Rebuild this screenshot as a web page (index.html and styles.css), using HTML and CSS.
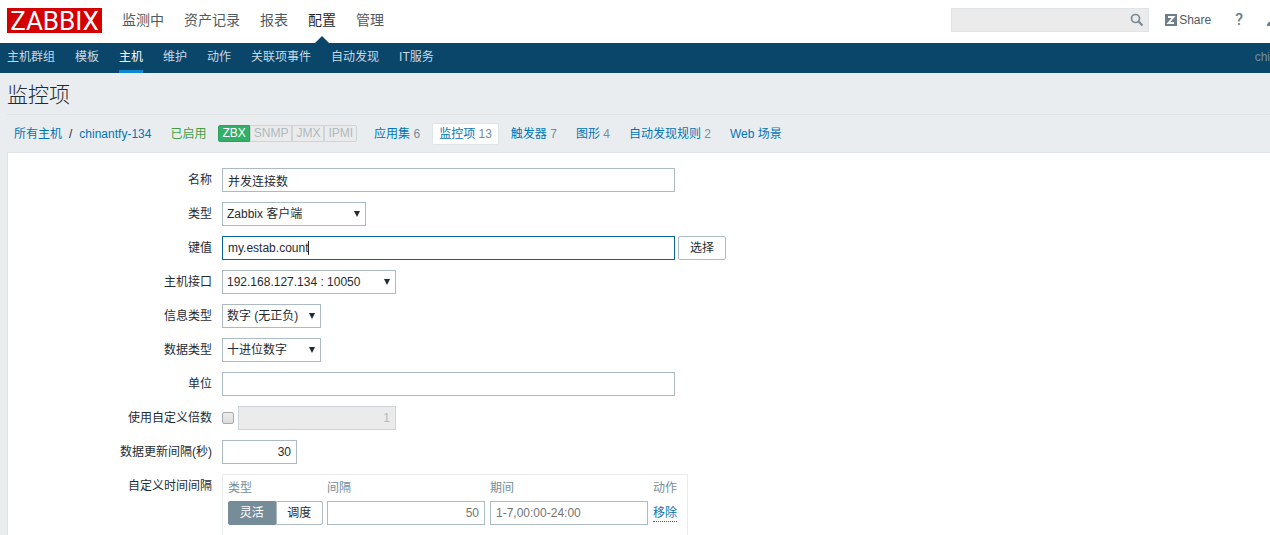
FILE: index.html
```html
<!DOCTYPE html>
<html lang="zh-CN">
<head>
<meta charset="utf-8">
<title>监控项</title>
<link rel="stylesheet" href="styles.css">
</head>
<body>
<header class="top">
  <a class="logo" href="#">ZABBIX</a>
  <nav class="main-nav">
    <a href="#">监测中</a>
    <a href="#">资产记录</a>
    <a href="#">报表</a>
    <a href="#" class="selected">配置</a>
    <a href="#">管理</a>
  </nav>
  <div class="tools">
    <form class="search">
      <input type="search" aria-label="搜索">
      <button type="button" aria-label="搜索">
        <svg width="14" height="14" viewBox="0 0 14 14" fill="none" stroke="#768d99"><circle cx="5.5" cy="5.5" r="4" stroke-width="1.7"/><path d="M8.3 8.3l4.2 4.2" stroke-width="2.2"/></svg>
      </button>
    </form>
    <a class="share" href="#"><svg width="12" height="12" viewBox="0 0 12 12"><path fill="#6c7f8a" d="M0 0h12v12H0z"/><path d="M3 3h5.6L3.4 9H9" fill="none" stroke="#fff" stroke-width="1.8"/></svg>Share</a>
    <a class="help" href="#" aria-label="帮助">?</a>
    <a class="profile" href="#" aria-label="用户"><svg width="14" height="14" viewBox="0 0 14 14" fill="#6c7f8a"><circle cx="7" cy="4" r="3"/><path d="M0 13c0-3 2-5 7-5s7 2 7 5z"/></svg></a>
  </div>
</header>
<nav class="sub-nav">
  <a href="#">主机群组</a>
  <a href="#">模板</a>
  <a href="#" class="selected">主机</a>
  <a href="#">维护</a>
  <a href="#">动作</a>
  <a href="#">关联项事件</a>
  <a href="#">自动发现</a>
  <a href="#">IT服务</a>
  <span class="server">chi</span>
</nav>
<main class="page">
  <h1>监控项</h1>
  <div class="object-bar">
    <div class="crumbs"><a href="#">所有主机</a><span>/</span><a href="#">chinantfy-134</a></div>
    <span class="enabled">已启用</span>
    <div class="status"><span class="on">ZBX</span><span>SNMP</span><span>JMX</span><span>IPMI</span></div>
    <a href="#">应用集 <sup>6</sup></a>
    <a href="#" class="selected">监控项 <sup>13</sup></a>
    <a href="#">触发器 <sup>7</sup></a>
    <a href="#">图形 <sup>4</sup></a>
    <a href="#">自动发现规则 <sup>2</sup></a>
    <a href="#">Web 场景</a>
  </div>
  <form class="panel">
    <label for="name">名称</label>
    <div class="field"><input class="wide" id="name" type="text" value="并发连接数"></div>
    <label for="type">类型</label>
    <div class="field"><span class="select type"><select id="type"><option>Zabbix 客户端</option></select></span></div>
    <label for="key">键值</label>
    <div class="field"><span class="caret"><input class="wide focused" id="key" type="text" value="my.estab.count"></span><button class="pick" type="button">选择</button></div>
    <label for="iface">主机接口</label>
    <div class="field"><span class="select iface"><select id="iface"><option>192.168.127.134 : 10050</option></select></span></div>
    <label for="info">信息类型</label>
    <div class="field"><span class="select short"><select id="info"><option>数字 (无正负)</option></select></span></div>
    <label for="data">数据类型</label>
    <div class="field"><span class="select short"><select id="data"><option>十进位数字</option></select></span></div>
    <label for="units">单位</label>
    <div class="field"><input class="wide" id="units" type="text"></div>
    <label for="multi">使用自定义倍数</label>
    <div class="field"><input id="multi" type="checkbox"><input class="medium number" type="text" value="1" aria-label="倍数" disabled></div>
    <label for="delay">数据更新间隔(秒)</label>
    <div class="field"><input class="tiny number" id="delay" type="text" value="30"></div>
    <span class="label">自定义时间间隔</span>
    <div class="intervals">
      <table>
        <thead><tr><th>类型</th><th>间隔</th><th>期间</th><th>动作</th></tr></thead>
        <tbody><tr>
          <td><div class="segmented"><input type="radio" name="kind" id="flex" checked><label for="flex">灵活</label><input type="radio" name="kind" id="sched"><label for="sched">调度</label></div></td>
          <td><input class="medium number" type="text" placeholder="50" aria-label="间隔"></td>
          <td><input class="medium" type="text" placeholder="1-7,00:00-24:00" aria-label="期间"></td>
          <td><button class="remove" type="button">移除</button></td>
        </tr></tbody>
      </table>
    </div>
  </form>
</main>
</body>
</html>
```
FILE: styles.css
```css
* { box-sizing: border-box; }

body {
  display: flex;
  flex-direction: column;
  min-height: 100vh;
  margin: 0;
  overflow-x: hidden;
  background: #e9edf0;
  color: #1f2c33;
  font: 12px/18px "Liberation Sans", "Noto Sans CJK SC", sans-serif;
}

a { color: #0275b8; text-decoration: none; }
input, select, button { margin: 0; color: inherit; font: inherit; }

.top {
  display: flex;
  align-items: center;
  height: 43px;
  padding: 0 0 3px 7px;
  overflow: hidden;
  background: #fff;
}

.logo {
  width: 95px;
  height: 25px;
  background: #d40000;
  color: #fff;
  font: 26px/26px Roboto, sans-serif;
  text-align: center;
}

.main-nav { display: flex; gap: 20px; margin-left: 20px; }
.main-nav a { position: relative; color: #4f5b62; font-size: 14px; line-height: 40px; }
.main-nav .selected { color: #1f2c33; }
.main-nav .selected::after {
  content: "";
  position: absolute;
  bottom: -4px;
  left: 6px;
  border: 8px solid transparent;
  border-top: 0;
  border-bottom-color: #0a466a;
}

.tools { display: flex; align-items: center; margin: 0 -11px 0 auto; }
.tools a { color: #4f5b62; }
.search {
  display: flex;
  align-items: center;
  width: 198px;
  height: 24px;
  padding: 0 4px;
  border: 1px solid #dfe4e7;
  background: #ebebeb;
}
.search input { flex: 1; min-width: 0; border: 0; outline: 0; background: none; }
.search button { display: flex; padding: 0; border: 0; background: none; }
.share { display: flex; align-items: center; gap: 2px; margin-left: 16px; }
.tools .help {
  margin-left: 24px;
  color: #6c7f8a;
  font: 500 16px/18px Roboto, sans-serif;
}
.profile { display: flex; margin-left: 24px; }

.sub-nav {
  display: flex;
  gap: 20px;
  padding-left: 7px;
  overflow: hidden;
  background: #0a466a;
  line-height: 27px;
}
.sub-nav a { padding-top: 2px; border-bottom: 3px solid transparent; color: #c8d8e2; line-height: 25px; }
.sub-nav .selected { border-color: #0f87cf; color: #fff; }
.server { margin-left: auto; padding-top: 1px; color: #728e9e; }

.page { display: flex; flex: 1; flex-direction: column; padding-left: 7px; }
h1 {
  margin: 0;
  padding-top: 2px;
  border-bottom: 1px solid #dfe4e7;
  font-size: 21px;
  font-weight: 300;
  line-height: 39px;
}

.object-bar { display: flex; align-items: center; gap: 5px; height: 37px; }
.object-bar > a, .crumbs, .enabled {
  padding: 1px 6px;
  border: 1px solid transparent;
  border-radius: 2px;
}
.object-bar > .selected { border-color: #dfe4e7; background: #fff; }
.object-bar sup { color: #768d99; font-size: 12px; line-height: 18px; vertical-align: baseline; }
.crumbs { display: flex; gap: 7px; }
.enabled { color: #429e47; }
.status { display: flex; margin-right: 5px; }
.status span {
  padding: 0 3px;
  border: 1px solid #ccd5d9;
  background: #ebebeb;
  color: #acbbc2;
  line-height: 15px;
}
.status .on { border-color: #2f9f5e; border-radius: 2px 0 0 2px; background: #34af67; color: #fff; }
.status span:last-child { border-radius: 0 2px 2px 0; }

.panel {
  display: grid;
  flex: 1;
  grid-template-columns: 204px 1fr;
  align-content: start;
  gap: 10px;
  padding-top: 15px;
  border: 1px solid #dfe4e7;
  border-width: 1px 0 0 1px;
  background: #fff;
}
.panel > label, .label { line-height: 24px; text-align: right; }
.field { display: flex; align-items: center; gap: 3px; }

input[type="text"], select {
  height: 24px;
  padding: 0 5px;
  border: 1px solid #acbbc2;
  border-radius: 0;
  outline: 0;
  background: #fff;
}
input[type="text"]:disabled { border-color: #ccd5d9; background: #ebebeb; color: #acbbc2; }
input::placeholder { color: #757575; opacity: 1; }
.wide { width: 453px; }
.medium { width: 158px; }
.tiny { width: 75px; }
.number { text-align: right; }
input[type="text"].focused { border-color: #0a6496; }

.caret { display: flex; position: relative; }
.caret::after {
  content: "";
  position: absolute;
  top: 5px;
  left: 86px;
  width: 1px;
  height: 14px;
  background: #1f2c33;
}

.select { position: relative; }
.select::after {
  content: "";
  position: absolute;
  top: 9px;
  right: 6px;
  border: 3px solid transparent;
  border-top: 6px solid #1f2c33;
  border-bottom: 0;
}
.select select { display: block; width: 100%; padding: 0 4px; appearance: none; }
.type { width: 144px; }
.iface { width: 174px; }
.short { width: 99px; }

.pick { width: 48px; height: 24px; padding: 0; border: 1px solid #acbbc2; border-radius: 2px; background: #fff; }

input[type="checkbox"] {
  width: 12px;
  height: 12px;
  margin-right: 1px;
  border: 1px solid #aaa;
  border-radius: 2px;
  background: linear-gradient(#ececec, #dcdcdc);
  appearance: none;
}

.intervals { justify-self: start; padding: 4px 10px 10px 5px; border: 1px solid #e9edf0; }
.intervals table { border-collapse: collapse; }
.intervals th { padding: 0; color: #768d99; font-weight: 400; line-height: 18px; text-align: left; }
.intervals td { padding: 4px 5px 0 0; }
.intervals td:first-child { padding-right: 4px; }
.intervals td:last-child { padding-right: 0; }
.intervals td > input { display: block; }

.segmented { display: flex; width: 95px; }
.segmented input { position: absolute; opacity: 0; }
.segmented label { flex: 1; height: 24px; border: 1px solid #acbbc2; border-radius: 0 2px 2px 0; line-height: 22px; text-align: center; }
.segmented label:first-of-type { border-radius: 2px 0 0 2px; }
.segmented :checked + label { border-color: #768d99; background: #768d99; color: #fff; }

.remove { padding: 0; border: 0; border-bottom: 1px dotted #0275b8; background: none; color: #0275b8; line-height: 16px; }
```
